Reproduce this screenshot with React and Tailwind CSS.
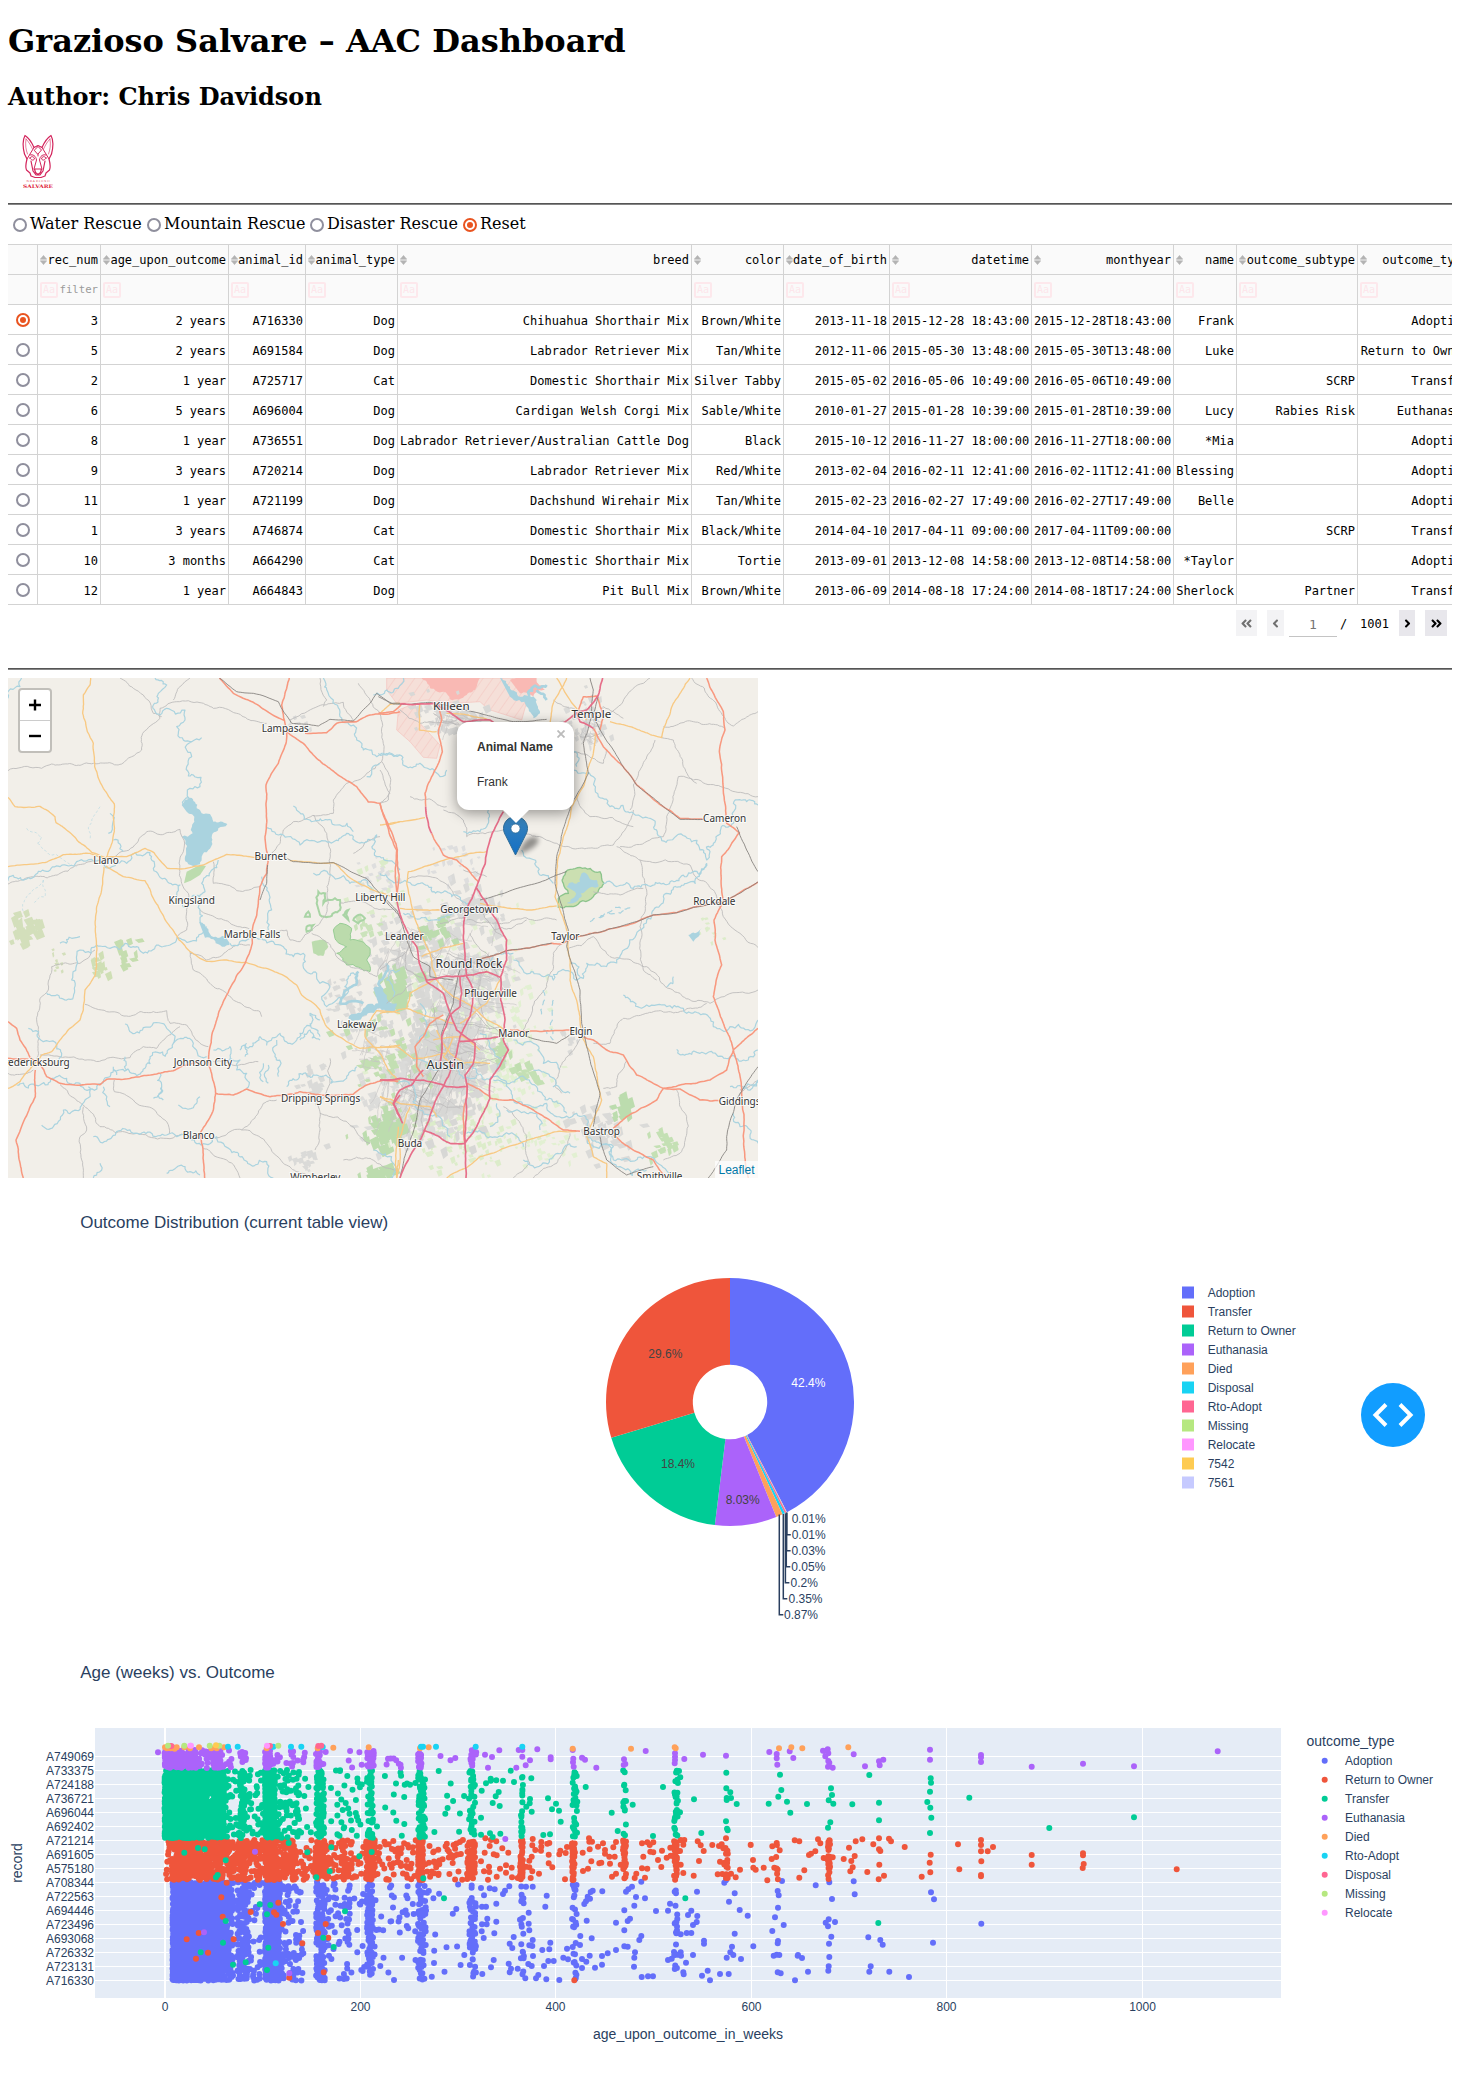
import React from "react";
import { FaAngleDoubleLeft, FaAngleLeft, FaAngleRight, FaAngleDoubleRight } from "react-icons/fa";

function makeRandom(seed) {
  let s = seed;
  return () => {
    s = (s * 1664525 + 1013904223) % 4294967296;
    return s / 4294967296;
  };
}

/* ---------- table ---------- */

const COLUMNS = ["rec_num", "age_upon_outcome", "animal_id", "animal_type", "breed", "color", "date_of_birth", "datetime", "monthyear", "name", "outcome_subtype", "outcome_type"];
const WIDTHS = [29, 63, 128, 77, 92, 294, 92, 106, 142, 142, 63, 121, 114];

const ROWS = [
  ["3", "2 years", "A716330", "Dog", "Chihuahua Shorthair Mix", "Brown/White", "2013-11-18", "2015-12-28 18:43:00", "2015-12-28T18:43:00", "Frank", "", "Adoption"],
  ["5", "2 years", "A691584", "Dog", "Labrador Retriever Mix", "Tan/White", "2012-11-06", "2015-05-30 13:48:00", "2015-05-30T13:48:00", "Luke", "", "Return to Owner"],
  ["2", "1 year", "A725717", "Cat", "Domestic Shorthair Mix", "Silver Tabby", "2015-05-02", "2016-05-06 10:49:00", "2016-05-06T10:49:00", "", "SCRP", "Transfer"],
  ["6", "5 years", "A696004", "Dog", "Cardigan Welsh Corgi Mix", "Sable/White", "2010-01-27", "2015-01-28 10:39:00", "2015-01-28T10:39:00", "Lucy", "Rabies Risk", "Euthanasia"],
  ["8", "1 year", "A736551", "Dog", "Labrador Retriever/Australian Cattle Dog", "Black", "2015-10-12", "2016-11-27 18:00:00", "2016-11-27T18:00:00", "*Mia", "", "Adoption"],
  ["9", "3 years", "A720214", "Dog", "Labrador Retriever Mix", "Red/White", "2013-02-04", "2016-02-11 12:41:00", "2016-02-11T12:41:00", "Blessing", "", "Adoption"],
  ["11", "1 year", "A721199", "Dog", "Dachshund Wirehair Mix", "Tan/White", "2015-02-23", "2016-02-27 17:49:00", "2016-02-27T17:49:00", "Belle", "", "Adoption"],
  ["1", "3 years", "A746874", "Cat", "Domestic Shorthair Mix", "Black/White", "2014-04-10", "2017-04-11 09:00:00", "2017-04-11T09:00:00", "", "SCRP", "Transfer"],
  ["10", "3 months", "A664290", "Cat", "Domestic Shorthair Mix", "Tortie", "2013-09-01", "2013-12-08 14:58:00", "2013-12-08T14:58:00", "*Taylor", "", "Adoption"],
  ["12", "1 year", "A664843", "Dog", "Pit Bull Mix", "Brown/White", "2013-06-09", "2014-08-18 17:24:00", "2014-08-18T17:24:00", "Sherlock", "Partner", "Transfer"],
];

function Radio({ checked }) {
  return checked ? (
    <span className="flex size-[14px] shrink-0 items-center justify-center rounded-full border-2 border-[#e95420] bg-white">
      <span className="size-[6px] rounded-full bg-[#e95420]" />
    </span>
  ) : (
    <span className="block size-[14px] shrink-0 rounded-full border-2 border-[#8f8f9d] bg-white" />
  );
}

function SortIcon() {
  return (
    <svg width="7" height="10" viewBox="0 0 7 10" className="shrink-0" fill="#b3b3b3" stroke="#b3b3b3" strokeWidth="0.6" strokeLinejoin="round">
      <path d="M3.5 .4 L6.7 4.2 H.3 Z M3.5 9.6 L6.7 5.8 H.3 Z" />
    </svg>
  );
}

function DataTable() {
  return (
    <div className="mt-[8px] overflow-hidden">
      <table className="w-[1463px] table-fixed border-separate border-spacing-0 border-b border-[#d3d3d3] font-['DejaVu_Sans_Mono',monospace] text-[12px] leading-[14px] text-black">
        <colgroup>
          {WIDTHS.map((w, i) => (
            <col key={i} style={{ width: w }} />
          ))}
        </colgroup>
        <thead>
          <tr className="h-[30px] bg-[#fafafa]">
            <th className="border-t border-[#d3d3d3] p-0" />
            {COLUMNS.map((c) => (
              <th key={c} className="border-t border-l border-[#d3d3d3] px-[2px] py-0 font-normal">
                <div className="flex items-center justify-between">
                  <SortIcon />
                  <span>{c}</span>
                </div>
              </th>
            ))}
          </tr>
          <tr className="h-[30px] bg-[#fafafa]">
            <th className="border-t border-[#d3d3d3] p-0" />
            {COLUMNS.map((c, i) => (
              <th key={c} className="border-t border-l border-[#d3d3d3] px-[2px] py-0 font-normal">
                <div className="flex items-center justify-between">
                  <span className="flex h-[16px] w-[18px] items-center justify-center rounded-[2px] border-2 border-[#fde8ec] text-[10px] leading-none text-[#fde6eb]">Aa</span>
                  {i === 0 && <span className="text-[10.67px] text-[#9b9b9b]">filter</span>}
                </div>
              </th>
            ))}
          </tr>
        </thead>
        <tbody>
          {ROWS.map((row, r) => (
            <tr key={r} className="h-[30px]">
              <td className="border-t border-[#d3d3d3] p-0 pl-[8px]">
                <Radio checked={r === 0} />
              </td>
              {row.map((v, i) => (
                <td key={i} className="border-t border-l border-[#d3d3d3] px-[2px] pt-[3px] pb-0 text-right whitespace-nowrap">
                  {v}
                </td>
              ))}
            </tr>
          ))}
        </tbody>
      </table>
      <div className="mt-[5px] flex h-[27px] items-start justify-end pr-[5px] font-['DejaVu_Sans_Mono',monospace] text-[12px] text-black">
        <span className="flex h-[26px] w-[21px] items-center justify-center bg-[#f3f3f5] text-[13px] text-[#707070]"><FaAngleDoubleLeft /></span>
        <span className="ml-[10px] flex h-[26px] w-[17px] items-center justify-center bg-[#f3f3f5] text-[13px] text-[#707070]"><FaAngleLeft /></span>
        <span className="ml-[5px] flex h-[27px] w-[48px] items-center justify-center border-b border-[#c4c4c4] pt-[3px] text-[13px] text-[#757575]">1</span>
        <span className="ml-[3px] w-[9px] pt-[5px]">/</span>
        <span className="ml-[11px] w-[29px] pt-[5px]">1001</span>
        <span className="ml-[10px] flex h-[26px] w-[16px] items-center justify-center bg-[#e8e7ec] text-[13px]"><FaAngleRight /></span>
        <span className="ml-[10px] flex h-[26px] w-[22px] items-center justify-center bg-[#e8e7ec] text-[13px]"><FaAngleDoubleRight /></span>
      </div>
    </div>
  );
}

/* ---------- map ---------- */

// Midpoint displacement gives rivers and lanes their natural wobble.
function wobble(points, amp, seed) {
  const rnd = makeRandom(seed);
  let pts = points.split(" ").map((p) => p.split(",").map(Number));
  for (let k = 0; k < 5; k++) {
    const next = [pts[0]];
    for (let i = 1; i < pts.length; i++) {
      const [x0, y0] = pts[i - 1];
      const [x1, y1] = pts[i];
      const dx = x1 - x0;
      const dy = y1 - y0;
      if (Math.hypot(dx, dy) > 10) {
        const d = (rnd() - 0.5) * amp;
        next.push([(x0 + x1) / 2 - dy * d, (y0 + y1) / 2 + dx * d]);
      }
      next.push([x1, y1]);
    }
    pts = next;
  }
  return "M" + pts.map(([x, y]) => x.toFixed(1) + " " + y.toFixed(1)).join("L");
}

function Lines({ data, amp, seed, ...rest }) {
  return <path d={data.map((p, i) => wobble(p, amp, seed + i * 77)).join("")} fill="none" strokeLinejoin="round" {...rest} />;
}

const WEST = {
  water: [
    "465,24 500,45 475,70 460,105 480,135 500,115 555,120 555,150 530,170 535,190 575,215 560,240 575,260 560,290 565,318 603,322 600,350 570,355 568,385 550,405",
    "575,215 605,203", "24,632 100,622 180,590 230,575 290,572 350,580 380,580 420,555 450,548 460,595 500,630 540,645 530,690 555,712",
    "620,770 570,815 540,805 510,825 470,825 430,850 400,830 375,820 330,835 300,828 240,840 230,870 215,930 220,980 140,968",
    "655,570 605,640 615,665 575,680", "600,700 600,750 620,780", "690,820 750,805 820,815 850,830 880,860 910,850 915,900 950,910 960,940 990,950 965,980 980,1010 1010,990 1040,930 1075,905",
    "800,473 850,495 900,525 960,515 1040,490 1060,500 1130,495 1140,560 1200,600", "880,408 930,450 1010,465 1060,485",
    "970,24 1000,90 1020,140 1060,165 1070,210 1090,240 1130,260 1200,255", "785,620 800,660 805,780", "375,1062 405,1090 500,1075 520,1120 580,1120 620,1160",
    "50,1245 120,1245 200,1225 240,1240 330,1220 400,1210 450,1160 520,1120", "640,1140 690,1130 685,1170 720,1170 710,1200 740,1210 740,1255",
    "720,1140 780,1100 800,1125 840,1090 870,1120 900,1090 930,1030 960,1050", "830,1110 825,1160 835,1220", "790,1180 790,1235", "805,1185 805,1240", "480,1210 485,1250 460,1285", "485,1250 490,1290",
    "535,1305 590,1300 600,1280", "280,1400 350,1385 400,1390 500,1395 560,1395 650,1400 670,1420 730,1465 800,1475 820,1524", "24,85 60,50 65,24", "860,1250 890,1230 950,1215 1040,1225 1070,1190",
    "500,1510 570,1505 600,1515", "265,1250 255,1290 190,1320 160,1370 125,1365", "940,610 1000,620 1050,640 1120,660", "85,1075 130,1115 185,1150 180,1180", "300,1480 280,1524", "330,430 325,490", "340,510 370,545",
    "180,820 240,800", "1100,320 1140,280", "740,1120 735,1160", "900,1110 930,1080 960,1110", "930,1060 960,1100", "340,1190 350,1215", "375,1160 380,1200", "310,1250 330,1310",
  ],
  gray: [
    "24,302 90,292 125,295 155,282 240,286 280,280 365,282 425,240 428,190 480,145 480,115 530,95 600,98 640,115 710,130 800,160", "360,24 400,55 430,75 460,130 485,140", "520,90 540,50 570,24",
    "24,642 180,610 270,575 345,560 440,485 525,485 540,478 550,545 545,640 565,670 560,780 530,805", "640,575 640,640 680,645 710,662 780,650", "870,150 940,115 1030,97 1060,150",
    "850,480 880,455 1000,430 1000,390 1040,340 1100,310 1145,275 1140,130 1075,40", "1145,275 1170,320 1165,390 1140,400", "810,560 840,520 850,480",
    "940,435 980,490 990,600 985,700 935,780 900,815 870,810 860,780 800,785", "600,720 650,745 700,765 755,780", "570,845 580,900 630,940 700,990 780,1025 785,1040",
    "255,1003 320,1025 380,1038 420,1025 500,1022 510,1060 560,1065 600,1120 625,1130", "104,1180 118,1100 120,985 145,960 155,890 240,880 285,840", "120,1155 390,1163 430,1130 470,1135 540,1070",
    "343,1230 343,1265 400,1290 500,1355 508,1392", "180,1244 250,1305 300,1370 400,1392 545,1392", "250,1310 260,1380 240,1400 250,1524", "645,1405 690,1385 750,1382 800,1420 850,1480 930,1520",
    "610,1435 680,1470 720,1524", "725,1380 790,1300 830,1290", "640,1175 775,1175", "990,1165 990,1240 950,1300 960,1380 945,1440", "24,1210 100,1200", "960,24 980,90 970,110", "1060,550 1140,500", "570,850 620,870 700,830 750,825",
    "960,1330 1060,1370 1110,1420", "1020,700 1100,700 1190,720", "935,790 1000,840 1050,890 1130,920 1160,870", "1030,1470 1110,1465 1190,1500",
  ],
  yellow: [
    "272,24 270,45 250,75 248,130 262,185 280,220 284,290 310,355 343,402 343,485 332,530 318,565", "24,382 45,410 80,412 120,409 165,440 168,458 235,515 275,547 318,565", "24,590 135,578 190,554 270,550 318,565",
    "318,560 380,560 435,535 462,548 502,595 555,596 610,585 680,553 730,558 760,562 800,562", "318,588 370,620 435,632 460,685 510,770 570,845 620,874 680,870 740,878 830,907 890,945 905,975 960,1020 980,1070 1040,1115 1080,1135 1150,1132 1200,1125",
    "312,590 305,660 290,710 290,830 286,915 255,960 250,1020 240,1050 210,1075 155,1145 125,1155 100,1185 60,1235 24,1255", "870,572 1000,578 1060,630 1130,665 1200,690",
    "1095,1100 1095,1075 1130,1022 1200,1030", "1095,1100 1140,1150 1165,1200 1190,1225", "1200,100 1170,103 1140,130", "1160,465 1200,455", "1140,1280 1180,1302", "1195,1370 1190,1524",
  ],
  orange: [
    "868,24 845,105 860,180 858,220 835,280 798,345 798,400 795,500 805,560 800,610 780,650 775,700 757,780 757,820 735,880 690,955 650,1050 628,1140 628,1190 647,1270 640,1320 600,1390 608,1430 614,1524",
    "658,24 700,70 760,97 855,152", "860,185 910,220 950,265 1030,325 1070,350 1105,396 1140,400 1192,540 1190,690", "915,190 980,188 1010,160 1070,155 1110,135 1200,125",
    "24,1055 50,1075 60,1110 90,1162 120,1180 140,1220 180,1240 300,1244 320,1228 370,1228 470,1212 520,1202 560,1185 600,1175", "647,1270 700,1275 740,1257 810,1280 900,1265 940,1272 1060,1273 1100,1245 1150,1230 1195,1235",
    "106,1200 106,1280 75,1345 48,1410 70,1524", "24,1165 85,1168",
  ],
  rail: ["658,24 710,65 760,70 835,95 875,160 955,168 990,148 1060,153 1110,100 1130,70 1170,100 1200,100", "860,565 880,575 1000,578 1100,625 1140,670 1190,720 1200,745", "803,585 800,640 780,690"],
};

const EAST = {
  water: [
    "-5,250 60,255 80,290 120,280 180,320 200,300", "325,420 320,470 300,485 250,485", "580,300 640,320 655,380 690,410 760,430 820,450 870,510 960,540 980,570 1060,460 1060,400 1100,395 1134,405", "425,540 470,590 520,640",
    "670,640 760,655 850,640 920,620 980,580", "725,850 800,750 850,680 920,640 980,580", "400,870 450,910 520,930 610,925 620,880 725,850", "0,610 60,640 120,640 200,665 270,700", "70,730 160,750 300,720",
    "730,975 800,1005 860,1010 920,1030 1000,1070 1050,1070 1134,1050", "890,1138 960,1150 1050,1160 1134,1140", "1050,1250 1134,1230", "260,1180 340,1220 380,1240 400,1290 500,1300 530,1340 590,1330 620,1400 660,1420 700,1470 800,1460 900,1520",
    "400,1110 460,1120 490,1180 540,1200", "340,1230 420,1220 470,1250 540,1300 560,1330", "330,1370 360,1330 350,1300", "1060,1330 1080,1370 1134,1420", "620,1400 640,1430 700,1430 720,1490 800,1500", "430,1470 520,1460 590,1430", "860,950 880,920", "60,900 20,930 40,980", "570,880 600,920", "580,245 590,290", "70,24 20,60 -20,75", "50,1240 120,1320 210,1400", "1134,1230 1080,1260", "330,880 400,850", "260,1390 330,1400 430,1430",
    "100,1170 160,1200 220,1195 290,1215", "-20,1440 40,1480 30,1524", "120,1000 140,1060 110,1120", "300,1090 340,1140 350,1200", "380,1320 440,1330 480,1380", "460,1200 500,1210 520,1250 570,1270",
  ],
  waterDash: ["490,960 485,1040", "520,990 510,1070 520,1100", "490,1080 520,1110", "630,755 680,730 760,715", "660,740 740,720"],
  gray: [
    "690,130 790,40 810,24", "670,110 730,145", "935,24 1060,168 1134,125", "845,203 880,210 910,290 950,340", "895,320 1134,380", "895,320 860,440 850,500", "825,210 780,300 760,345 750,420", "850,170 940,155 1035,175",
    "260,500 370,480 470,500 530,520 700,525 720,500 760,420", "0,300 30,370 0,400", "710,530 780,570 930,585 1000,660 1030,740 1080,790 1134,833", "780,570 800,660 780,770 790,900 830,930", "640,665 720,675 790,655", "260,750 340,760 530,750",
    "640,800 690,860 800,890 900,970 990,1000 1134,960", "640,1120 690,1120 730,1045 820,1025 980,1000", "605,1100 525,1250 545,1270", "670,1255 710,1250 740,1170", "560,810 520,850 500,950 430,1080", "890,1260 920,1340 900,1450 850,1470",
    "560,840 640,800", "1134,1230 1070,1290", "590,380 630,440 760,470", "340,780 440,750", "80,630 150,620 250,700", "190,420 250,450 260,500", "535,290 560,250 670,280 680,240", "370,1310 440,1400 450,1480 400,1524", "90,380 200,410", "250,600 320,620", "570,1390 530,1480 460,1524", "850,500 720,530", "160,1200 330,1180", "120,780 60,860 0,900", "420,240 480,260", "380,1150 300,1180 250,1200", "100,940 20,1000", "180,760 260,740",
    "130,1240 120,1420", "60,1240 150,1300 250,1310", "90,1200 100,1290 170,1330", "10,1290 130,1310", "180,940 330,1080", "130,1060 240,1060 360,1070", "160,1000 220,1200", "150,1140 290,1150", "300,720 370,800", "270,790 340,880 370,960", "130,800 190,900", "90,800 80,900 140,930", "200,850 350,880", "300,920 310,1040 370,1100", "60,120 120,160 230,150", "160,130 230,165", "520,90 620,120", "600,200 660,190",
  ],
  yellow: [
    "930,24 880,100 845,203 690,155", "530,24 570,90 620,150", "560,24 520,100 510,160", "120,100 118,180 170,185", "0,465 60,455 135,443", "80,640 85,605 150,585 215,565 320,545", "80,640 110,760 150,850 170,930 220,980 290,1020 320,1050 375,1080",
    "60,715 180,720", "300,700 360,710 450,720 530,708", "640,250 610,350 575,410 550,500 530,600 525,680 560,780 570,870 570,930 600,1040 605,1090", "640,250 645,190", "605,1100 640,1160 665,1290 620,1400 640,1460 680,1480 680,1524",
    "0,1030 80,1015 130,1035 220,1060", "80,1015 90,970 160,930", "0,1130 50,1130 100,1165 200,1150", "200,1524 300,1460 430,1415 530,1385 590,1384", "170,1080 210,1150 250,1180 330,1180", "50,1524 60,1400 90,1310", "125,860 250,820", "220,1100 190,1160 220,1190",
    "0,1280 60,1300 150,1310 170,1340", "360,930 320,1000 240,1060", "200,130 330,150", "160,1110 250,1100 300,1140", "50,1524 55,1470",
  ],
  orange: [
    "-5,130 40,125 65,102", "175,100 185,150 175,190 187,245 155,320 135,370 137,410", "155,490 190,555 230,570 295,635", "0,400 50,540 50,680", "590,130 610,80 650,78 670,140 660,180", "640,175 670,230 720,280 770,345 850,410 900,445 970,448",
    "980,24 1030,125 1035,180 1018,245 1035,400 1040,460 1078,488 1025,560 1030,690 1002,750 1005,810 1025,885 1000,980 1030,1060 1060,1140 1085,1270 1105,1524", "300,868 380,842 515,820 540,822 600,798 720,770 820,735 890,728 940,712 1040,690 1134,636",
    "390,1080 570,1080", "605,1100 640,1110 690,1145 730,1155 770,1215 850,1255 900,1245 990,1230 1040,1200 1060,1140 1134,1075", "850,1255 900,1257 960,1290 1020,1292", "850,1255 830,1290 740,1340 700,1375", "330,1285 400,1290 460,1320 550,1380 600,1384",
    "700,1395 770,1445 820,1470 860,1524", "0,1230 60,1228", "190,1035 150,1060 130,1100 105,1130 110,1190 130,1220", "260,1240 250,1330 255,1420", "262,1240 330,1280",
  ],
  motorway: [
    "668,24 655,75 620,120 590,130 550,158", "60,102 160,100 220,135 250,155 330,150 360,170", "590,130 600,155 640,175", "370,425 330,510 290,650 258,720 250,800 255,850 260,920 280,960 270,1040 240,1100 205,1220 160,1310 130,1390 60,1524",
    "290,655 320,700 350,750 380,810 380,870 362,920 362,990 375,1050 370,1110 385,1140 355,1195 330,1230 330,1285", "137,410 140,440 155,490", "50,690 70,760 110,830 118,880 140,935 190,970 210,1030 230,1080 285,1120 280,1180 255,1215 262,1250 255,1420 258,1524",
    "140,930 200,918 280,915 320,905 360,922", "240,920 245,970 240,1010 210,1035 185,1100 180,1190", "235,1115 300,1107 360,1100", "0,1230 60,1225 130,1230 200,1250 260,1250", "130,1200 95,1245 60,1260 40,1300 68,1360", "130,1380 210,1420 255,1420 290,1370 330,1285",
  ],
  rail: [
    "-5,80 40,102 150,97 300,130 400,155 500,148", "630,24 640,60 635,140 610,220 625,310 575,400 530,560 525,640 565,780 560,830 600,960 605,1060 620,1130 660,1270 640,1370", "655,80 640,140 700,240 770,345 850,410 900,448 970,448", "300,690 430,650 560,605",
    "1070,470 1100,540 1134,605", "300,868 380,842 515,820", "600,798 720,770 820,735 890,728 940,712 1040,690 1134,636", "100,860 150,890 150,920 220,930", "240,900 220,1000 185,1090 180,1190 120,1290 60,1524", "1134,1190 1070,1290 1040,1400 1040,1440 985,1524",
    "440,1100 530,1120 590,1080", "0,670 60,740 100,860", "660,1400 680,1470 740,1515 820,1490",
  ],
};

// Clusters of small patches: [cx, cy, rx, ry, count, colour, size]
const PATCHES = [
  [1390, 1000, 200, 300, 170, "#e2efd2", 13], [1500, 1150, 130, 180, 150, "#e2f0d2", 13], [1350, 1400, 180, 90, 110, "#dcecca", 13], [1600, 1420, 120, 80, 40, "#e2f0d2", 12], [1130, 640, 90, 80, 24, "#dcecca", 12], [2130, 790, 30, 40, 10, "#dcecca", 10],
  [1360, 960, 130, 260, 330, "#dadad8", 20], [1310, 1180, 110, 190, 330, "#d7d7d5", 20], [1200, 1290, 120, 120, 120, "#dcdcda", 18],
  [1180, 850, 70, 90, 60, "#dadad8", 18], [1420, 720, 70, 60, 50, "#dadad8", 18], [1330, 130, 90, 50, 60, "#d8d8d6", 16], [1750, 160, 60, 80, 50, "#dadad8", 14],
  [1800, 1380, 80, 70, 44, "#dadad8", 18], [930, 1240, 40, 50, 26, "#dadad8", 16], [1030, 990, 60, 60, 36, "#dadad8", 14], [1700, 1110, 30, 30, 10, "#dadad8", 12], [1130, 1100, 110, 110, 70, "#dadad8", 15],
  [1130, 620, 50, 50, 22, "#dedede", 12], [1340, 580, 70, 60, 24, "#dedede", 12], [880, 160, 40, 25, 10, "#dadad8", 11], [910, 1470, 50, 40, 20, "#dadad8", 14],
  [1150, 1180, 120, 180, 70, "#c3dfb2", 18], [1140, 1380, 50, 50, 34, "#bcdcae", 24], [1130, 1500, 60, 25, 20, "#bcdcae", 22],
  [1175, 950, 45, 50, 30, "#bcdcae", 26], [1300, 780, 45, 35, 22, "#bcdcae", 18], [1495, 1150, 35, 45, 24, "#c0deb0", 18], [1570, 1210, 40, 30, 12, "#c4e0b4", 20],
  [1855, 1300, 25, 50, 14, "#bcdcae", 24], [1980, 1420, 35, 40, 20, "#c4e0b4", 16], [365, 840, 35, 40, 16, "#c5ddaf", 17], [60, 780, 38, 55, 26, "#d3dfbb", 22], [165, 870, 22, 35, 9, "#d3dfbb", 11],
  [290, 885, 30, 30, 14, "#cfdfb5", 18], [1090, 770, 40, 35, 14, "#cbe3bb", 14],
];

function patchPath([cx, cy, rx, ry, n, , size], seed) {
  const rnd = makeRandom(seed);
  let d = "";
  for (let i = 0; i < n; i++) {
    const x = cx + (rnd() + rnd() + rnd() - 1.5) * rx * 1.1;
    const y = cy + (rnd() + rnd() + rnd() - 1.5) * ry * 1.1;
    const w = size * (0.4 + rnd());
    const h = size * (0.4 + rnd());
    d += `M${x.toFixed(0)} ${y.toFixed(0)}l${w.toFixed(0)} ${(-h * 0.4).toFixed(0)}l${(w * 0.3).toFixed(0)} ${h.toFixed(0)}l${(-w * 0.8).toFixed(0)} ${(h * 0.4).toFixed(0)}z`;
  }
  return d;
}

// Short connecting streets around a town: two headings at right angles.
function streets([cx, cy, rx, ry, n, len], seed) {
  const rnd = makeRandom(seed);
  const out = [];
  for (let i = 0; i < n; i++) {
    const x = cx + (rnd() + rnd() - 1) * rx;
    const y = cy + (rnd() + rnd() - 1) * ry;
    const a = (rnd() < 0.5 ? 0.35 : 1.92) + (rnd() - 0.5) * 0.5;
    const l = len * (0.5 + rnd());
    out.push(`${x.toFixed(0)},${y.toFixed(0)} ${(x + Math.cos(a) * l).toFixed(0)},${(y + Math.sin(a) * l).toFixed(0)}`);
  }
  return out;
}
const TOWNS = [[1350, 1130, 120, 170, 90, 70], [1390, 890, 120, 160, 60, 70], [1220, 1260, 110, 80, 34, 60], [1210, 830, 60, 90, 20, 60], [1330, 135, 60, 30, 22, 40], [1760, 170, 40, 60, 16, 40], [1110, 1130, 90, 80, 16, 50]];

// [text, x, baseline, size, anchor]
const PLACES = [
  ["Lampasas", 856, 186, 30], ["Llano", 318, 581, 30], ["Kingsland", 575, 702, 30], ["Burnet", 812, 571, 30], ["Marble Falls", 756, 805, 30], ["Johnson City", 609, 1187, 30], ["Fredericksburg", 209, 1187, 30, "end"],
  ["Blanco", 596, 1407, 30], ["Dripping Springs", 962, 1295, 30], ["Lakeway", 1071, 1075, 30], ["Wimberley", 946, 1532, 30], ["Killeen", 1354, 119, 35], ["Temple", 1774, 145, 35], ["Cameron", 2174, 455, 30],
  ["Rockdale", 2143, 706, 30], ["Georgetown", 1408, 730, 30], ["Liberty Hill", 1141, 694, 30], ["Leander", 1213, 810, 30], ["Taylor", 1696, 811, 30], ["Round Rock", 1407, 894, 36], ["Pflugerville", 1472, 980, 30],
  ["Manor", 1541, 1102, 30], ["Elgin", 1743, 1094, 30], ["Austin", 1336, 1196, 38], ["Bastrop", 1805, 1396, 30], ["Buda", 1230, 1431, 30], ["Giddings", 2156, 1304, 30, "start"], ["Smithville", 1979, 1529, 30],
];

const ROAD = { gray: "#bcbbbb", yellow: "#f8c983", orange: "#f8987f", motorway: "#e66e89", rail: "#83807c" };

function MapDrawing() {
  return (
    <svg width="750" height="500" viewBox="24 24 2250 1500" className="block bg-[#f2efe9]">
      <defs>
        <pattern id="hatch" width="24" height="24" patternUnits="userSpaceOnUse" patternTransform="rotate(35)">
          <path d="M0 0V24" stroke="#f3bdb8" strokeWidth="2.4" />
        </pattern>
      </defs>
      {["1160,24 1600,24 1565,150 1465,118 1440,95 1360,100 1280,90 1190,100 1160,60", "1195,120 1245,100 1260,160 1320,225 1310,265 1270,262 1230,215 1190,180"].map((p) => (
        <g key={p}>
          <polygon points={p} fill="#f5dfd8" />
          <polygon points={p} fill="url(#hatch)" stroke="#f5c3bc" strokeWidth="2" />
        </g>
      ))}
      <path d={wobble("1265,24 1290,55 1330,65 1350,88 1400,75 1430,50 1440,24", 0.4, 5) + "Z"} fill="#f9b9b4" />
      <path d={wobble("1530,30 1610,25 1635,60 1600,80 1560,70", 0.4, 6) + "Z"} fill="#f9b9b4" />
      {PATCHES.map((p, i) => (
        <path key={i} d={patchPath(p, 900 + i * 31)} fill={p[5]} />
      ))}
      <path d={wobble("935,815 975,810 985,830 970,858 940,850", 0.2, 9) + "Z"} fill="#bcdcae" />
      <path d={wobble("1000,780 1020,760 1055,775 1050,810 1110,835 1100,870 1110,905 1040,885 1010,850 1040,830 1005,805", 0.3, 10) + "Z"} fill="#bbdbac" stroke="#98cd95" strokeWidth="3" />
      <path d={["950,700 955,665 975,670 970,700 990,690 1020,690 1020,720 985,740 960,735", "1030,735 1045,720 1045,750", "1060,750 1075,735 1095,745 1075,760", "915,740 925,725 930,740", "920,785 920,770 940,765 935,780"].map((p, i) => wobble(p, 0.4, 40 + i) + "Z").join("")} fill="none" stroke="#a9d4a5" strokeWidth="6" />
      <path d="M552 640L560 605L600 584L618 588L600 615L572 632Z" fill="#bcdcae" />
      <path d={wobble("1675,685 1705,670 1690,640 1690,620 1740,592 1800,605 1812,640 1780,680 1720,710 1675,712", 0.4, 12) + "Z"} fill="#cbdfb1" stroke="#8cc48c" strokeWidth="4" />

      <g fill="#aad3df">
        <path d={wobble("545,405 570,383 590,415 605,430 630,432 640,455 682,462 655,475 635,515 625,540 605,560 600,583 565,583 555,560 545,500 578,490 582,450 560,425", 0.5, 21) + "Z"} />
        <path d={wobble("597,755 615,765 630,792 680,800 688,825 660,825 640,808 615,803", 0.4, 22) + "Z"} />
        <path d={wobble("1700,650 1740,635 1745,610 1790,630 1795,650 1760,660 1735,690 1700,700 1725,665", 0.6, 23) + "Z"} />
        <path d={wobble("1500,24 1530,50 1560,80 1610,90 1620,130 1600,145 1580,110 1530,80", 0.5, 24) + "Z"} />
        <path d={wobble("1120,955 1150,955 1160,985 1190,1000 1185,1025 1140,1015 1100,1035 1045,1045 1090,1015 1135,1000", 0.5, 25) + "Z"} />
        <path d={wobble("2065,795 2085,790 2105,775 2095,800 2080,815", 0.5, 26) + "Z"} />
      </g>
      <Lines data={["1580,90 1600,50 1640,45", "1610,60 1640,90", "1075,905 1055,950 1020,1000 1090,1000", "1140,960 1165,900 1160,880"]} amp={0.6} seed={60} stroke="#aad3df" strokeWidth="8" />

      {TOWNS.map((t, i) => <Lines key={i} data={streets(t, 31 + i * 17)} amp={0.15} seed={70 + i} stroke="#c6c5c5" strokeWidth="1.9" />)}
      <Lines data={WEST.gray} amp={0.22} seed={100} stroke={ROAD.gray} strokeWidth="2.6" />
      <g transform="translate(1140 0)"><Lines data={EAST.gray} amp={0.22} seed={200} stroke={ROAD.gray} strokeWidth="2.6" /></g>
      <Lines data={WEST.water} amp={0.62} seed={300} stroke="#aad3df" strokeWidth="3.6" />
      <g transform="translate(1140 0)">
        <Lines data={EAST.water} amp={0.62} seed={400} stroke="#aad3df" strokeWidth="3.6" />
        <Lines data={EAST.waterDash} amp={0.3} seed={450} stroke="#aad3df" strokeWidth="3.6" strokeDasharray="18 12" />
      </g>
      <Lines data={["80,475 125,500 110,520 190,570 230,590", "300,410 280,440 270,510", "130,630 80,680 70,730", "130,630 135,680 100,700"]} amp={0.3} seed={460} stroke="#b8d9e2" strokeWidth="2" strokeDasharray="8 6" />
      <Lines data={WEST.yellow} amp={0.1} seed={500} stroke={ROAD.yellow} strokeWidth="4" />
      <g transform="translate(1140 0)"><Lines data={EAST.yellow} amp={0.1} seed={600} stroke={ROAD.yellow} strokeWidth="4" /></g>
      <Lines data={WEST.orange} amp={0.09} seed={700} stroke={ROAD.orange} strokeWidth="4.6" />
      <g transform="translate(1140 0)"><Lines data={EAST.orange} amp={0.09} seed={800} stroke={ROAD.orange} strokeWidth="4.6" /></g>
      <Lines data={WEST.rail} amp={0.06} seed={900} stroke={ROAD.rail} strokeWidth="2.6" />
      <g transform="translate(1140 0)">
        <Lines data={EAST.rail} amp={0.06} seed={1000} stroke={ROAD.rail} strokeWidth="2.6" />
        <Lines data={EAST.motorway} amp={0.08} seed={1100} stroke={ROAD.motorway} strokeWidth="5" />
      </g>
      <Lines data={["1200,1275 1180,1302 1200,1340"]} amp={0.05} seed={1200} stroke={ROAD.motorway} strokeWidth="5" />

      <g className="font-['Noto_Sans',sans-serif]" fill="#333" stroke="#fff" strokeOpacity="0.75" strokeWidth="6" strokeLinejoin="round" paintOrder="stroke">
        {PLACES.map(([t, x, y, s, a]) => (
          <text key={t} x={x} y={y} fontSize={s} textAnchor={a || "middle"}>{t}</text>
        ))}
      </g>
    </svg>
  );
}

function MarkerPin() {
  return (
    <svg width="58" height="41" viewBox="0 0 58 41" className="absolute top-[138px] left-[495px]">
      <defs>
        <linearGradient id="pin" x1="0" y1="0" x2="0" y2="1">
          <stop offset="0" stopColor="#3a83b8" />
          <stop offset="1" stopColor="#126fc6" />
        </linearGradient>
        <filter id="soft" x="-50%" y="-50%" width="200%" height="200%"><feGaussianBlur stdDeviation="2.4" /></filter>
      </defs>
      <path d="M13 40 L20 28 C24 21 31 19 35 22 C37 26 32 31 26 34 Z" fill="#000" opacity="0.4" filter="url(#soft)" />
      <path d="M12.5 .5 C5.9 .5 .5 5.9 .5 12.4 C.5 15 1.3 17.2 2.8 19.8 L12.5 39 L22.2 19.8 C23.7 17.2 24.5 15 24.5 12.4 C24.5 5.9 19.1 .5 12.5 .5 Z" fill="url(#pin)" stroke="#2e6c97" />
      <circle cx="12.5" cy="12.5" r="4.6" fill="#fff" stroke="#2e6c97" strokeWidth=".8" />
    </svg>
  );
}

function MapPanel() {
  return (
    <div className="relative mt-[8px] h-[500px] w-[750px] overflow-hidden font-['Liberation_Sans',sans-serif] text-[12px]">
      <MapDrawing />
      <MarkerPin />
      <div className="absolute top-[10px] left-[10px] flex h-[65px] w-[34px] flex-col rounded-[4px] border-2 border-black/20 bg-white bg-clip-padding text-black">
        <div className="flex h-[31px] items-center justify-center border-b border-[#ccc]">
          <svg width="12" height="12" viewBox="0 0 12 12" stroke="#000" strokeWidth="2.4"><path d="M0 6H12M6 .5V11.5" /></svg>
        </div>
        <div className="flex h-[30px] items-center justify-center">
          <svg width="12" height="12" viewBox="0 0 12 12" stroke="#000" strokeWidth="2.4"><path d="M0 6H12" /></svg>
        </div>
      </div>
      <div className="absolute top-[44px] left-[449px] h-[88px] w-[117px] rounded-[12px] bg-white shadow-[0_3px_14px_rgba(0,0,0,0.4)]">
        <div className="flex flex-col gap-[21px] pt-[18px] pl-[20px] leading-[14px] text-[#333]">
          <span className="font-bold whitespace-nowrap">Animal Name</span>
          <span>Frank</span>
        </div>
        <svg width="8" height="8" viewBox="0 0 8 8" className="absolute top-[8px] right-[9px]" stroke="#bbb" strokeWidth="1.8"><path d="M.5 .5L7.5 7.5M7.5 .5L.5 7.5" /></svg>
      </div>
      <svg width="28" height="14" viewBox="0 0 28 14" className="absolute top-[131px] left-[494px]"><path d="M0 0H28L14 14Z" fill="#fff" /></svg>
      <div className="absolute right-0 bottom-0 flex h-[17px] w-[43px] items-center justify-center bg-white/70 text-[#0078a8]">Leaflet</div>
    </div>
  );
}

/* ---------- pie ---------- */

const PIE = [
  [42.4, "#636efa"], [0.01, "#c6caff"], [0.01, "#fecb52"], [0.03, "#ff97ff"], [0.05, "#b6e880"], [0.2, "#ff6692"], [0.35, "#19d3f3"], [0.87, "#ffa15a"], [8.03, "#ab63fa"], [18.4, "#00cc96"], [29.65, "#ef553b"],
];
const PIE_LEGEND = [
  ["Adoption", "#636efa"], ["Transfer", "#ef553b"], ["Return to Owner", "#00cc96"], ["Euthanasia", "#ab63fa"], ["Died", "#ffa15a"], ["Disposal", "#19d3f3"], ["Rto-Adopt", "#ff6692"], ["Missing", "#b6e880"], ["Relocate", "#ff97ff"], ["7542", "#fecb52"], ["7561", "#c6caff"],
];
const PIE_SMALL = [["0.01%", 791.7, 787], ["0.01%", 791.7, 786.8], ["0.03%", 791.5, 786.6], ["0.05%", 791.3, 786.3], ["0.2%", 790.5, 785.4], ["0.35%", 788.5, 783.3], ["0.87%", 784, 779.3]];

function PieChart() {
  const cx = 730;
  const cy = 1402;
  const r = 124;
  const h = 37.2;
  let acc = 0;
  const at = (f, rad) => `${(cx + rad * Math.sin(f * 2 * Math.PI)).toFixed(2)} ${(cy - rad * Math.cos(f * 2 * Math.PI)).toFixed(2)}`;
  return (
    <svg width="1444" height="450" viewBox="8 1178 1444 450" className="block font-['Liberation_Sans',sans-serif]" fill="#2a3f5f" fontSize="12">
      <text x="80.2" y="1228" fontSize="17">Outcome Distribution (current table view)</text>
      {PIE.map(([v, c], i) => {
        const a = acc / 100;
        acc += v;
        const b = acc / 100;
        return <path key={i} d={`M${at(a, h)}L${at(a, r)}A${r} ${r} 0 0 1 ${at(b, r)}L${at(b, h)}A${h} ${h} 0 0 0 ${at(a, h)}Z`} fill={c} />;
      })}
      <g textAnchor="middle" fill="#444">
        <text x="808.3" y="1387" fill="#fff">42.4%</text>
        <text x="665.3" y="1358">29.6%</text>
        <text x="678" y="1468">18.4%</text>
        <text x="742.7" y="1504">8.03%</text>
      </g>
      {PIE_SMALL.map(([t, x, lx], i) => (
        <g key={i}>
          {i > 0 && <path d={`M${lx} ${1512 + i * 0.4}V${1518.7 + 16 * i}h4`} fill="none" stroke="#2a3f5f" strokeWidth="1.5" />}
          <text x={x} y={1522.7 + 16 * i}>{t}</text>
        </g>
      ))}
      {PIE_LEGEND.map(([t, c], i) => (
        <g key={t}>
          <rect x="1182" y={1286.5 + 19 * i} width="12" height="12" fill={c} />
          <text x="1207.7" y={1297 + 19 * i}>{t}</text>
        </g>
      ))}
    </svg>
  );
}

/* ---------- scatter ---------- */

const COLORS = { blue: "#636efa", red: "#ef553b", green: "#00cc96", purple: "#ab63fa", orange: "#ffa15a", cyan: "#19d3f3", pink: "#ff6692", lime: "#b6e880", rose: "#ff97ff", gold: "#fecb52" };

// [x from, x to, number of records]
const DENSE = {
  blue: { y: [1882, 1980.5], spans: [[172.5, 195, 1900], [195, 222, 1000], [222, 233, 170], [237, 249, 150], [250, 262, 32], [265, 280, 700], [281, 304, 80], [316, 325, 150], [325, 342, 30], [343, 350, 30], [351, 366, 12], [367, 373, 80], [374, 416, 34], [418, 426, 70], [427, 465, 16], [469, 476, 50], [520, 524, 18], [572, 577, 30], [674, 678, 20]] },
  red: { y: [1840, 1880], spans: [[166, 170, 10], [172, 188, 190], [188, 213, 190], [213, 222, 110], [222, 236, 50], [237, 247, 85], [247, 264, 60], [265, 276, 170], [276, 288, 42], [288, 296, 55], [296, 312, 20], [313, 327, 90], [328, 341, 18], [341, 352, 38], [352, 364, 11], [366, 375, 85], [376, 416, 50], [418, 423, 90], [424, 465, 38], [467, 475, 60], [520, 523, 50], [572, 575, 40], [623, 626, 34], [674, 677, 38], [724, 728, 10], [776, 778, 8], [828, 830, 30]] },
  green: { y: [1770, 1838], spans: [[164.5, 194, 1900], [194, 211, 290], [212, 224, 480], [225, 264, 85], [240, 245, 50], [265, 275, 350], [276, 300, 75], [301, 314, 7], [316, 324, 100], [325, 364, 34], [367, 373, 50], [374, 416, 16], [418, 425, 60], [426, 468, 10], [469, 475, 36], [521, 523, 22], [572, 577, 30], [623, 626, 14], [674, 678, 30]] },
  purple: { y: [1750, 1768], spans: [[164.5, 184, 140], [188, 196, 70], [199, 209, 18], [213, 221, 60], [222, 233, 8], [240, 246, 12], [265, 271, 70], [271, 310, 18], [316, 320, 38], [321, 363, 7], [367, 374, 36], [376, 415, 8], [418, 422, 24], [423, 465, 3], [470, 474, 10], [475, 480, 2]] },
};

// Single records, stored at three units per pixel from (480, 1700).
const SINGLES = {
  blue: "3,564 29,565 44,568 75,572 88,559 69,582 12,586 138,560 158,560 49,611 6,620 18,620 200,587 196,620 146,638 22,656 49,665 6,673 20,673 146,671 148,691 43,700 5,694 11,714 130,701 101,711 89,731 97,744 158,720 157,738 148,736 128,755 187,750 208,748 211,728 159,768 41,780 33,802 86,791 93,806 113,806 89,817 145,792 155,798 192,798 205,783 221,783 136,835 168,835 175,825 199,838 238,840 7,822 261,746 250,773 264,778 300,735 301,708 306,777 319,785 306,804 329,767 335,715 345,803 366,794 366,768 383,760 408,750 320,662 408,668 367,574 338,572 330,596 313,612 318,604 323,590 332,576 456,560 445,568 438,575 484,545 468,591 495,595 463,617 433,631 528,633 450,656 443,663 433,691 478,720 484,708 433,739 443,740 465,757 463,773 462,800 485,831 504,829 519,829 564,632 570,611 651,575 634,632 624,645 652,648 650,666 639,675 602,703 620,699 634,699 672,722 672,731 602,757 639,765 603,767 564,780 575,776 618,788 610,817 611,823 683,812 666,827 690,841 733,548 738,541 764,580 747,605 779,630 803,647 764,701 820,739 756,740 751,757 760,765 740,773 783,777 720,822 746,822 906,543 893,573 896,586 894,623 885,652 911,675 877,693 894,723 893,730 881,767 890,764 898,765 954,765 953,767 966,774 893,817 902,820 984,815 945,841 1007,556 1048,547 1121,544 1124,583 1056,597 1046,658 1065,666 1037,668 1044,679 1054,710 1047,731 1048,771 1046,799 1045,812 1165,712 1201,720 1208,734 1172,799 1168,815 1228,815 1287,831 1353,577 1362,598 1359,728 1504,671",
  red: "16,415 33,420 49,424 29,438 67,445 14,458 41,463 50,466 85,458 3,484 27,500 12,514 28,516 24,539 50,530 60,506 78,496 95,503 78,518 96,532 113,534 158,417 157,436 184,426 208,429 202,431 184,440 166,450 183,452 155,470 148,482 206,464 138,500 157,514 148,502 177,521 152,534 206,490 217,502 238,463 241,452 261,441 257,459 255,538 327,415 336,425 329,448 308,458 354,440 369,430 375,450 388,470 404,470 375,461 408,426 400,442 390,491 358,490 364,488 334,484 309,513 324,506 396,530 408,521 328,425 422,494 486,430 502,427 520,427 509,435 520,457 511,455 546,452 571,443 560,473 572,467 534,480 490,470 544,501 486,505 502,506 469,521 495,533 464,534 602,420 613,420 610,434 653,424 662,436 671,453 697,435 600,453 657,483 602,494 610,519 641,527 738,415 717,438 725,433 730,445 738,461 742,480 720,485 740,495 743,503 713,523 727,522 738,534 753,521 767,532 780,509 812,435 819,480 820,503 827,509 851,503 862,541 812,434 877,439 875,477 883,503 899,451 944,421 958,424 987,465 993,461 1006,454 973,511 958,533 1014,418 1021,430 1031,474 1058,472 1091,477 1107,443 1127,424 1147,418 1124,468 1114,483 1118,502 1111,514 1162,516 1180,433 1197,415 1197,448 1201,453 1227,416 1233,424 1274,441 1198,494 1196,538 1212,527 1325,530 1352,464 1349,488 1351,517 1434,433 1438,508 1503,420 1503,435 1503,454 1504,484 1503,525 1503,529 1523,454 1539,441 1655,465 1655,494 1809,460 1809,466 1811,492 1808,504 2090,508 283,841",
  green: "18,250 32,236 32,242 49,241 69,242 102,246 92,212 154,235 5,272 56,276 47,289 38,309 59,318 3,353 30,400 38,411 61,401 3,404 204,295 216,328 228,311 237,332 242,365 150,297 149,310 139,320 155,335 190,405 210,403 292,305 317,261 395,338 413,393 458,314 433,254 549,261 519,408 597,213 601,232 600,337 642,298 664,399 739,218 739,265 751,277 753,294 740,294 740,300 770,312 738,364 741,386 743,391 866,311 900,224 904,270 895,290 921,305 931,338 981,312 1053,265 1056,285 1046,301 1060,311 1051,367 1044,383 1117,313 1168,225 1197,308 1197,361 1352,235 1353,248 1350,275 1342,306 1351,323 1354,353 1350,399 1468,293 1962,352 1708,384 616,595 1195,669",
  purple: "15,164 58,151 36,171 24,203 116,150 127,150 127,170 172,148 150,181 137,196 109,203 212,172 212,178 278,150 306,173 315,179 349,203 432,178 431,195 436,192 497,153 613,177 669,164 738,167 868,156 890,162 890,175 892,194 929,154 940,174 1029,152 1043,148 1045,160 1036,169 1045,183 1048,188 1044,200 1058,203 1121,163 1155,199 1197,184 1210,179 1199,196 1350,149 1350,179 1503,165 1503,172 1503,186 1655,200 1809,191 1962,199 2213,154 585,160 585,170 585,180 584,190 280,176 279,187 281,200 76,417",
};

// Overlay records, three units per pixel from (0, 1640).
const OVERLAY = [
  ["purple", "474,337"],
  ["red", "664,772 668,830 596,879 560,898 588,956 624,938 752,816 835,788 822,817 829,824 849,852 701,898 868,1013 907,910 977,852 954,879 985,893 971,997 680,728"],
  ["green", "553,638 594,624 614,628 677,661 648,712 653,705 677,843 669,908 602,937 699,974 737,967 801,990 805,923 801,823 779,793 811,795 866,609 922,637 994,622 989,694 949,712 1078,649 1115,636 1270,715 1332,775 1035,814 970,893 1001,921"],
  ["purple", "612,877 868,1000 765,635"],
  ["orange", "495,322 500,325 505,320 512,325 518,322 524,326 530,322 553,322 570,325 597,322 634,325 650,325 672,322 800,325 953,325 1000,323 1106,322 1260,325 1286,322 1719,326 1893,326 2799,326 3193,322 3196,325 3334,324 3444,322 3540,326"],
  ["cyan", "684,320 713,320 820,320 873,320 904,320 968,321 1263,320 1269,320 1308,320 1427,320 1567,320"],
  ["pink", "510,318 514,318 805,318 810,318 955,318 964,317"],
  ["lime", "504,317 553,317 629,317 658,317 835,317"],
  ["rose", "571,317 573,317 801,317"],
  ["gold", "648,316"],
  ["cyan", "827,970"],
];
OVERLAY[4][1] = "495,322 500,325 505,320 512,325 518,322 524,326 530,322 553,322 570,325 597,322 634,325 650,325 672,322 800,325 953,325 1000,323 1106,322 1260,325 1286,322 1718,326 1893,326 2024,322 2027,325 2337,325 2374,322 2407,325 2545,322";

function dots(list, ox, oy) {
  return list.split(" ").map((p) => {
    const [x, y] = p.split(",").map(Number);
    return `M${(ox + x / 3).toFixed(1)} ${(oy + y / 3).toFixed(1)}h0`;
  }).join("");
}

function denseDots({ y, spans }, seed) {
  const rnd = makeRandom(seed);
  let d = "";
  spans.forEach(([a, b, n]) => {
    for (let i = 0; i < n; i++) d += `M${(a + rnd() * (b - a)).toFixed(1)} ${(y[0] + rnd() * (y[1] - y[0])).toFixed(1)}h0`;
  });
  return d;
}

const Y_TICKS = ["A749069", "A733375", "A724188", "A736721", "A696044", "A692402", "A721214", "A691605", "A575180", "A708344", "A722563", "A694446", "A723496", "A693068", "A726332", "A723131", "A716330"];
const X_TICKS = [[0, 165], [200, 360.5], [400, 555.5], [600, 751.5], [800, 946.5], [1000, 1142.5]];
const SCATTER_LEGEND = [["Adoption", "#636efa"], ["Return to Owner", "#ef553b"], ["Transfer", "#00cc96"], ["Euthanasia", "#ab63fa"], ["Died", "#ffa15a"], ["Rto-Adopt", "#19d3f3"], ["Disposal", "#ff6692"], ["Missing", "#b6e880"], ["Relocate", "#ff97ff"]];

function ScatterChart() {
  return (
    <svg width="1444" height="450" viewBox="8 1628 1444 450" className="block font-['Liberation_Sans',sans-serif]" fill="#2a3f5f" fontSize="12">
      <text x="80.2" y="1678.3" fontSize="17">Age (weeks) vs. Outcome</text>
      <rect x="95" y="1728" width="1186" height="270" fill="#e5ecf6" />
      <g stroke="#fff">
        {X_TICKS.map(([v, x]) => <path key={v} d={`M${x} 1728V1998`} strokeWidth={v === 0 ? 2 : 1} />)}
        {Y_TICKS.map((t, i) => <path key={t} d={`M95 ${1756.5 + 14 * i}H1281`} />)}
      </g>
      <g fill="none" strokeWidth="6" strokeLinecap="round">
        {["blue", "red", "green", "purple"].map((k, i) => (
          <path key={k} d={denseDots(DENSE[k], 17 + i * 101) + dots(SINGLES[k], 480, 1700)} stroke={COLORS[k]} />
        ))}
        {OVERLAY.map(([k, list], i) => <path key={i} d={dots(list, 0, 1640)} stroke={COLORS[k]} />)}
      </g>
      {Y_TICKS.map((t, i) => <text key={t} x="94" y={1760.5 + 14 * i} textAnchor="end">{t}</text>)}
      {X_TICKS.map(([v, x]) => <text key={v} x={x} y="2011" textAnchor="middle">{v}</text>)}
      <text x="688" y="2039" fontSize="14" textAnchor="middle">age_upon_outcome_in_weeks</text>
      <text transform="translate(22 1863) rotate(-90)" fontSize="14" textAnchor="middle">record</text>
      <text x="1306.5" y="1745.5" fontSize="14">outcome_type</text>
      {SCATTER_LEGEND.map(([t, c], i) => (
        <g key={t}>
          <circle cx="1324.7" cy={1760.7 + 19 * i} r="3" fill={c} />
          <text x="1345" y={1765 + 19 * i}>{t}</text>
        </g>
      ))}
    </svg>
  );
}

/* ---------- page ---------- */

function Logo() {
  return (
    <svg width="32" height="55" viewBox="0 0 32 55" className="ml-[14px] block" fill="none" stroke="#d3245c" strokeWidth="1.2" strokeLinejoin="round" strokeLinecap="round">
      <path d="M2.5 20 C.5 12 1 5 3 1.5 C7 4 10 9 12 13.5 L16 11.5 L20 13.5 C22 9 25 4 29 1.5 C31 5 31.5 12 29.5 20" />
      <path d="M4 5 C3 11 4 16 5.5 20 M4 5 C7 8 9 12 10.5 15 M28 5 C29 11 28 16 26.5 20 M28 5 C25 8 23 12 21.5 15" strokeWidth=".6" />
      <path d="M2.5 20 L5 25 C4 29 3 33 4.5 36 L8 39 L9 42 L13 43.5 H19 L23 42 L24 39 L27.5 36 C29 33 28 29 27 25 L29.5 20" />
      <path d="M12 13.5 L8 20 L5 25 M20 13.500 L24 20 L27 25 M12.5 16 L16 12.5 L19.5 16 L16 20 Z M16 20 V22 M8 21 C11 20 14 22 14.500 26 L12 35 M24 21 C21 20 18 22 17.500 26 L20 35 M8 24 C9 22 12 22 12.500 25 C11 27 9 26 8 24 Z M24 24 C23 22 20 22 19.500 25 C21 27 23 26 24 24 Z" strokeWidth="1" />
      <path d="M12.5 35 H19.500 L18.500 38.500 L16 40.500 L13.500 38.500 Z M9 27 L11 37 L14 41 H18 L21 37 L23 27" />
      <g stroke="none" fill="#e01f3d" className="font-['DejaVu_Serif',serif]" textAnchor="middle">
        <text x="16" y="48" fontSize="2.8" textLength="23">GRAZIOSO</text>
        <text x="16" y="54" fontSize="4.8" fontWeight="bold" textLength="30" lengthAdjust="spacingAndGlyphs">SALVARE</text>
      </g>
    </svg>
  );
}

function Rule() {
  return <div className="h-[2px] border-t border-b border-t-[#555] border-b-[#858585]" />;
}

const FILTERS = [["Water Rescue", "w-[134px]"], ["Mountain Rescue", "w-[163px]"], ["Disaster Rescue", "w-[153px]"], ["Reset", "w-[80px]"]];

export default function App() {
  return (
    <div className="h-[2086px] w-[1460px] overflow-hidden bg-white px-[8px] font-['DejaVu_Serif',serif] text-[16px] text-black">
      <h1 className="h-[60px] pt-[22px] text-[32px] leading-[38px] font-bold">Grazioso Salvare – AAC Dashboard</h1>
      <h2 className="h-[74px] pt-[23px] text-[24px] leading-[28px] font-bold">Author: Chris Davidson</h2>
      <div className="h-[69px]">
        <Logo />
      </div>
      <Rule />
      <div className="mt-[9px] flex h-[22px] pl-[5px]">
        {FILTERS.map(([label, w]) => (
          <label key={label} className={"flex items-center gap-[3px] whitespace-nowrap " + w}>
            <Radio checked={label === "Reset"} />
            <span className="pb-[2px] leading-[18px]">{label}</span>
          </label>
        ))}
      </div>
      <DataTable />
      <div className="mt-[31px]">
        <Rule />
      </div>
      <MapPanel />
      <PieChart />
      <ScatterChart />
      <button className="fixed top-[1383px] left-[1361px] flex size-[64px] items-center justify-center rounded-full bg-[#119dff]">
        <svg width="42" height="24" viewBox="0 0 42 24" fill="none" stroke="#fff" strokeWidth="4"><path d="M14 1.5L3.5 12L14 22.5M28 1.5L38.5 12L28 22.5" /></svg>
      </button>
    </div>
  );
}
